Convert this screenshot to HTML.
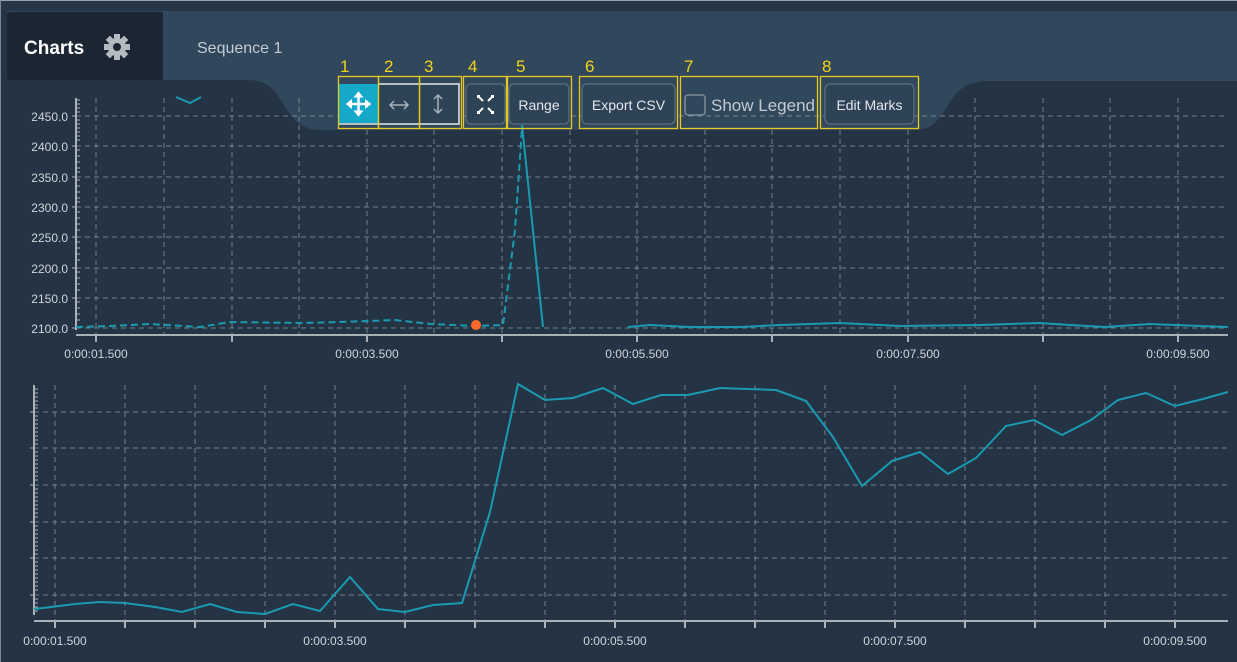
<!DOCTYPE html>
<html><head><meta charset="utf-8"><style>
html,body{margin:0;padding:0;background:#243444;}
body{width:1237px;height:662px;overflow:hidden;position:relative;font-family:"Liberation Sans",sans-serif;}
svg{position:absolute;left:0;top:0;}
.t{font-family:"Liberation Sans",sans-serif;}
</style></head><body>
<svg width="1237" height="662" viewBox="0 0 1237 662">
<rect x="0" y="0" width="1237" height="662" fill="#243444"/>
<rect x="0" y="0" width="1237" height="11" fill="#273646"/>
<rect x="0" y="0" width="1237" height="1" fill="#9aa3ab"/>
<rect x="0" y="0" width="1" height="662" fill="#7d8791"/>
<!-- header shape -->
<path d="M7 11 H1237 V81 H990 C960 81 955 95 945 110 C935 125 930 130 910 130 H320 C300 130 292 118 282 102 C272 86 265 80 245 80 H7 Z" fill="#31475b"/>
<rect x="7" y="12" width="156" height="68" fill="#1b2632" rx="2"/>
<text x="24" y="54" fill="#ffffff" font-size="19" font-weight="bold" class="t">Charts</text>
<!-- gear -->
<g transform="translate(117,47)" fill="#b4bac0">
<circle r="9"/>
<g><rect x="-3" y="-13" width="6" height="26"/><rect x="-3" y="-13" width="6" height="26" transform="rotate(45)"/><rect x="-3" y="-13" width="6" height="26" transform="rotate(90)"/><rect x="-3" y="-13" width="6" height="26" transform="rotate(135)"/></g>
<circle r="4" fill="#1b2632"/>
</g>
<text x="197" y="53" fill="#c4cbd2" font-size="16" class="t">Sequence 1</text>

<!-- TOP CHART grid -->
<g stroke="#8a949e" stroke-width="1" stroke-dasharray="5,4" opacity="0.8">
<line x1="76" y1="116" x2="1228" y2="116"/><line x1="76" y1="146" x2="1228" y2="146"/><line x1="76" y1="177" x2="1228" y2="177"/><line x1="76" y1="207" x2="1228" y2="207"/><line x1="76" y1="237" x2="1228" y2="237"/><line x1="76" y1="268" x2="1228" y2="268"/><line x1="76" y1="298" x2="1228" y2="298"/><line x1="76" y1="328" x2="1228" y2="328"/>
<line x1="96" y1="98" x2="96" y2="335"/><line x1="164" y1="98" x2="164" y2="335"/><line x1="232" y1="98" x2="232" y2="335"/><line x1="299" y1="98" x2="299" y2="335"/><line x1="367" y1="130" x2="367" y2="335"/><line x1="434" y1="130" x2="434" y2="335"/><line x1="502" y1="130" x2="502" y2="335"/><line x1="570" y1="130" x2="570" y2="335"/><line x1="637" y1="130" x2="637" y2="335"/><line x1="705" y1="130" x2="705" y2="335"/><line x1="772" y1="130" x2="772" y2="335"/><line x1="840" y1="130" x2="840" y2="335"/><line x1="908" y1="130" x2="908" y2="335"/><line x1="975" y1="98" x2="975" y2="335"/><line x1="1043" y1="98" x2="1043" y2="335"/><line x1="1110" y1="98" x2="1110" y2="335"/><line x1="1178" y1="98" x2="1178" y2="335"/>
</g>
<g stroke="#a9b0b7" stroke-width="2">
<line x1="76" y1="98" x2="76" y2="330"/>
<line x1="76" y1="335" x2="1228" y2="335"/>
<line x1="96" y1="335" x2="96" y2="342"/><line x1="232" y1="335" x2="232" y2="342"/><line x1="367" y1="335" x2="367" y2="342"/><line x1="502" y1="335" x2="502" y2="342"/><line x1="637" y1="335" x2="637" y2="342"/><line x1="772" y1="335" x2="772" y2="342"/><line x1="908" y1="335" x2="908" y2="342"/><line x1="1043" y1="335" x2="1043" y2="342"/><line x1="1178" y1="335" x2="1178" y2="342"/>
</g>
<g stroke="#a9b0b7" stroke-width="1">
<path d="M76 100h4M76 104h4M76 108h4M76 112h4M76 120h4M76 124h4M76 128h4M76 132h4M76 136h4M76 140h4M76 150h4M76 156h4M76 162h4M76 168h4M76 172h4M76 180h4M76 186h4M76 192h4M76 198h4M76 202h4M76 212h4M76 218h4M76 224h4M76 230h4M76 242h4M76 248h4M76 254h4M76 260h4M76 272h4M76 278h4M76 284h4M76 290h4M76 302h4M76 308h4M76 314h4M76 320h4M72 116h4M72 146h4M72 177h4M72 207h4M72 237h4M72 268h4M72 298h4M72 328h4"/>
</g>
<g fill="#d0d5da" font-size="12" class="t" text-anchor="end">
<text x="68" y="121">2450.0</text><text x="68" y="151">2400.0</text><text x="68" y="182">2350.0</text><text x="68" y="212">2300.0</text><text x="68" y="242">2250.0</text><text x="68" y="273">2200.0</text><text x="68" y="303">2150.0</text><text x="68" y="333">2100.0</text>
</g>
<g fill="#d0d5da" font-size="12" class="t" text-anchor="middle">
<text x="96" y="358">0:00:01.500</text><text x="367" y="358">0:00:03.500</text><text x="637" y="358">0:00:05.500</text><text x="908" y="358">0:00:07.500</text><text x="1178" y="358">0:00:09.500</text>
</g>
<g fill="none" stroke="#1a9bb2" stroke-width="2">
<path d="M76 327 L110 326 L150 324 L200 327 L230 322 L300 323 L340 322 L395 320 L430 324 L476 326 L503 325 L515 230 L522 128" stroke-dasharray="7,4"/>
<path d="M522 125 L543 327"/>
<path d="M176 97 L190 103 L201 97"/>
<path d="M628 327 L650 325 L690 327 L740 327 L780 325 L840 323 L900 326 L980 325 L1040 323 L1070 325 L1105 327 L1150 324 L1200 326 L1228 327"/>
</g>
<circle cx="476" cy="325" r="5" fill="#ff6a2a"/>

<!-- BOTTOM CHART -->
<g stroke="#8a949e" stroke-width="1" stroke-dasharray="5,4" opacity="0.8">
<line x1="34" y1="412" x2="1228" y2="412"/><line x1="34" y1="448" x2="1228" y2="448"/><line x1="34" y1="485" x2="1228" y2="485"/><line x1="34" y1="522" x2="1228" y2="522"/><line x1="34" y1="558" x2="1228" y2="558"/><line x1="34" y1="595" x2="1228" y2="595"/>
<line x1="55" y1="385" x2="55" y2="621"/><line x1="125" y1="385" x2="125" y2="621"/><line x1="195" y1="385" x2="195" y2="621"/><line x1="265" y1="385" x2="265" y2="621"/><line x1="335" y1="385" x2="335" y2="621"/><line x1="405" y1="385" x2="405" y2="621"/><line x1="475" y1="385" x2="475" y2="621"/><line x1="545" y1="385" x2="545" y2="621"/><line x1="615" y1="385" x2="615" y2="621"/><line x1="685" y1="385" x2="685" y2="621"/><line x1="755" y1="385" x2="755" y2="621"/><line x1="825" y1="385" x2="825" y2="621"/><line x1="895" y1="385" x2="895" y2="621"/><line x1="965" y1="385" x2="965" y2="621"/><line x1="1035" y1="385" x2="1035" y2="621"/><line x1="1105" y1="385" x2="1105" y2="621"/><line x1="1175" y1="385" x2="1175" y2="621"/>
</g>
<g stroke="#a9b0b7" stroke-width="2">
<line x1="34" y1="385" x2="34" y2="615"/>
<line x1="34" y1="621" x2="1228" y2="621"/>
<line x1="55" y1="621" x2="55" y2="628"/><line x1="125" y1="621" x2="125" y2="628"/><line x1="195" y1="621" x2="195" y2="628"/><line x1="265" y1="621" x2="265" y2="628"/><line x1="335" y1="621" x2="335" y2="628"/><line x1="405" y1="621" x2="405" y2="628"/><line x1="475" y1="621" x2="475" y2="628"/><line x1="545" y1="621" x2="545" y2="628"/><line x1="615" y1="621" x2="615" y2="628"/><line x1="685" y1="621" x2="685" y2="628"/><line x1="755" y1="621" x2="755" y2="628"/><line x1="825" y1="621" x2="825" y2="628"/><line x1="895" y1="621" x2="895" y2="628"/><line x1="965" y1="621" x2="965" y2="628"/><line x1="1035" y1="621" x2="1035" y2="628"/><line x1="1105" y1="621" x2="1105" y2="628"/><line x1="1175" y1="621" x2="1175" y2="628"/>
</g>
<g stroke="#a9b0b7" stroke-width="1">
<path d="M34 389h4M34 393h4M34 397h4M34 401h4M34 405h4M34 408h4M34 416h4M34 420h4M34 424h4M34 428h4M34 432h4M34 436h4M34 440h4M34 444h4M34 452h4M34 456h4M34 460h4M34 464h4M34 468h4M34 472h4M34 476h4M34 480h4M34 489h4M34 493h4M34 497h4M34 501h4M34 505h4M34 509h4M34 513h4M34 517h4M34 526h4M34 530h4M34 534h4M34 538h4M34 542h4M34 546h4M34 550h4M34 554h4M34 562h4M34 566h4M34 570h4M34 574h4M34 578h4M34 582h4M34 586h4M34 590h4M34 599h4M34 603h4M34 607h4M34 611h4M30 412h4M30 448h4M30 485h4M30 522h4M30 558h4M30 595h4"/>
</g>
<g fill="#d0d5da" font-size="12" class="t" text-anchor="middle">
<text x="55" y="645">0:00:01.500</text><text x="335" y="645">0:00:03.500</text><text x="615" y="645">0:00:05.500</text><text x="895" y="645">0:00:07.500</text><text x="1175" y="645">0:00:09.500</text>
</g>
<polyline fill="none" stroke="#1a9bb2" stroke-width="2" points="34,609 43,608 75,604 100,602 125,603 155,607 182,612 210,604 237,612 265,614 293,604 320,611 350,577 378,609 405,612 433,605 462,603 490,512 518,384 545,400 573,398 603,388 633,404 661,395 688,395 720,388 748,389 776,390 806,401 833,437 862,486 892,461 920,452 948,474 976,458 1006,426 1034,420 1062,435 1091,420 1118,400 1146,393 1175,406 1203,399 1228,392"/>

<!-- TOOLBAR -->
<rect x="339" y="84" width="39" height="40" fill="#14a9c8"/>
<rect x="378" y="84" width="81" height="40" fill="#2e4356"/>
<path d="M378 84 H459 V124 H339" fill="none" stroke="#b8c0c7" stroke-width="2"/>
<line x1="339" y1="124" x2="378" y2="124" stroke="#b8c0c7" stroke-width="2"/>
<!-- move icon -->
<g stroke="#fff" stroke-width="2.5" fill="#fff" transform="translate(358.5,104)">
<line x1="-9" y1="0" x2="9" y2="0"/><line x1="0" y1="-9" x2="0" y2="9"/>
<path d="M-12 0 L-7 -4 L-7 4Z M12 0 L7 -4 L7 4Z M0 -12 L-4 -7 L4 -7Z M0 12 L-4 7 L4 7Z" stroke-width="1"/>
</g>
<g stroke="#aab2ba" stroke-width="1.5" fill="none">
<path d="M390 105 H408 M394 101 L390 105 L394 109 M404 101 L408 105 L404 109"/>
<path d="M438 95 V113 M434 99 L438 95 L442 99 M434 109 L438 113 L442 109"/>
</g>
<rect x="466" y="84" width="39" height="40" rx="5" fill="#2e4356" stroke="#56687a" stroke-width="1.5"/>
<g stroke="#fff" stroke-width="2" fill="none">
<path d="M478 98 V96 H480 M478 96 L483 101 M493 98 V96 H491 M493 96 L488 101 M478 111 V113 H480 M478 113 L483 108 M493 111 V113 H491 M493 113 L488 108"/>
</g>
<rect x="509" y="84" width="60" height="40" rx="5" fill="#2e4356" stroke="#56687a" stroke-width="1.5"/>
<text x="539" y="110" fill="#e4e8ec" font-size="14" text-anchor="middle" class="t">Range</text>
<rect x="582" y="84" width="93" height="40" rx="5" fill="#2e4356" stroke="#56687a" stroke-width="1.5"/>
<text x="628.5" y="110" fill="#e4e8ec" font-size="14" text-anchor="middle" class="t">Export CSV</text>
<rect x="685" y="95" width="20" height="20" rx="3" fill="none" stroke="#7d8b98" stroke-width="1.5"/>
<text x="711" y="111" fill="#c4cbd2" font-size="17" class="t">Show Legend</text>
<rect x="825" y="84" width="89" height="40" rx="5" fill="#2e4356" stroke="#56687a" stroke-width="1.5"/>
<text x="869.5" y="110" fill="#e4e8ec" font-size="14" text-anchor="middle" class="t">Edit Marks</text>
<!-- yellow annotation boxes -->
<g fill="none" stroke="#e6c823" stroke-width="1.3">
<rect x="338.5" y="76.5" width="40" height="52"/><rect x="378.5" y="76.5" width="41" height="52"/><rect x="419.5" y="76.5" width="42" height="52"/><rect x="463.5" y="76.5" width="43" height="52"/><rect x="507.5" y="76.5" width="64" height="52"/><rect x="579.5" y="76.5" width="98" height="52"/><rect x="680.5" y="76.5" width="137" height="52"/><rect x="820.5" y="76.5" width="98" height="52"/>
</g>
<g fill="#f2d21c" font-size="17" class="t">
<text x="340" y="72">1</text><text x="384" y="72">2</text><text x="424" y="72">3</text><text x="468" y="72">4</text><text x="516" y="72">5</text><text x="585" y="72">6</text><text x="684" y="72">7</text><text x="822" y="72">8</text>
</g>
</svg>
</body></html>
